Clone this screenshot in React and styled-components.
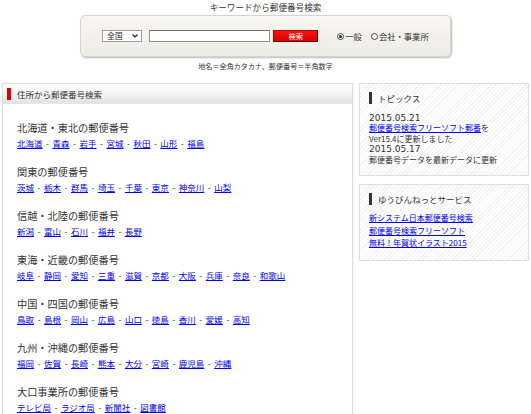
import styled, { createGlobalStyle } from "styled-components";

const GlobalStyle = createGlobalStyle`
  html, body {
    margin: 0;
    padding: 0;
    background: #fff;
  }
  body {
    font-family: "Noto Sans CJK JP", "Noto Sans", sans-serif;
    color: #333;
    width: 531px;
    overflow: hidden;
  }
`;

const Page = styled.div`
  display: flex;
  flex-direction: column;
`;

const Top = styled.header`
  display: flex;
  flex-direction: column;
  align-items: center;
`;

const Title = styled.h1`
  margin: 1px 0 2px;
  font-size: 8.6px;
  line-height: 12px;
  font-weight: normal;
  color: #333;
`;

const SearchBox = styled.form`
  box-sizing: border-box;
  width: 371px;
  height: 42px;
  display: flex;
  align-items: center;
  justify-content: center;
  border: 1px solid #d6d4cf;
  border-radius: 5px;
  background: linear-gradient(#f7f6f2, #eeece5);
  box-shadow: 1px 1px 2px rgba(0, 0, 0, 0.28);
  margin: 0;
`;

const SelectWrap = styled.div`
  position: relative;
  display: flex;
  width: 40px;
  height: 12px;
`;

const Select = styled.select`
  appearance: none;
  -webkit-appearance: none;
  display: block;
  box-sizing: border-box;
  width: 40px;
  height: 12px;
  min-height: 0;
  margin: 0;
  padding: 0 0 0 4px;
  border: 1px solid #9a9a9a;
  border-radius: 0;
  background: #fff;
  font-family: inherit;
  font-size: 7.6px;
  line-height: 10px;
  color: #222;
  outline: none;
`;

const Chevron = styled.svg`
  position: absolute;
  right: 4px;
  top: 4px;
  width: 6px;
  height: 4px;
  pointer-events: none;
`;

const TextInput = styled.input`
  box-sizing: border-box;
  width: 121px;
  height: 12px;
  margin: 0 0 0 7px;
  border: 1px solid #8f8f8f;
  border-top-color: #6f6f6f;
  background: #fff;
  padding: 0;
`;

const SubmitButton = styled.button`
  box-sizing: border-box;
  width: 45px;
  height: 12px;
  margin-left: 3px;
  padding: 0;
  border: 1px solid #b00000;
  border-right-color: #6a0000;
  border-bottom-color: #6a0000;
  background: linear-gradient(#ff1010, #d80000);
  color: #fff;
  font-family: inherit;
  font-size: 7.4px;
  line-height: 10px;
`;

const RadioGroup = styled.div`
  display: flex;
  align-items: center;
  gap: 9px;
  margin-left: 19px;
`;

const RadioLabel = styled.label`
  display: flex;
  align-items: center;
  font-size: 8.3px;
  line-height: 12px;
  color: #333;
`;

const Radio = styled.input`
  appearance: none;
  box-sizing: border-box;
  width: 7px;
  height: 7px;
  margin: 0 1px 0 0;
  border: 1px solid #444;
  border-radius: 50%;
  background: #fff;
  display: grid;
  place-content: center;

  &:checked::before {
    content: "";
    width: 3px;
    height: 3px;
    border-radius: 50%;
    background: #222;
  }
`;

const Note = styled.p`
  margin: 4px 0 0;
  font-size: 7.1px;
  line-height: 10px;
  color: #333;
`;

const Main = styled.div`
  display: flex;
  align-items: flex-start;
  gap: 6px;
  margin: 12px 0 0 2px;
`;

const LeftPanel = styled.section`
  box-sizing: border-box;
  width: 351px;
  height: 360px;
  border: 1px solid #dcdcdc;
  box-shadow: 0 0 1px rgba(0, 0, 0, 0.15);
  background: #fff;
`;

const LeftHeader = styled.h2`
  display: flex;
  align-items: center;
  gap: 6px;
  height: 19px;
  margin: 0;
  padding-left: 4px;
  font-size: 8.5px;
  font-weight: normal;
  color: #333;
  background: linear-gradient(#ffffff, #f1f1f1 55%, #e2e2e2);
  border-bottom: 1px solid #e6e6e6;
`;

const RedBar = styled.span`
  width: 4px;
  height: 12px;
  background: #e00000;
`;

const LeftBody = styled.div`
  padding: 16px 0 0 14px;
`;

const Region = styled.div`
  margin-bottom: 13px;
`;

const RegionTitle = styled.h3`
  margin: 0;
  font-size: 10.2px;
  line-height: 15px;
  font-weight: normal;
  color: #333;
`;

const LinkRow = styled.div`
  font-size: 8.5px;
  line-height: 16px;
`;

const Link = styled.a`
  color: #0000ee;
  text-decoration: underline;
`;

const Sep = styled.span`
  padding: 0 3.5px;
  color: #333;
`;

const RightColumn = styled.aside`
  display: flex;
  flex-direction: column;
  gap: 8px;
  width: 170px;
`;

const SidePanel = styled.section`
  box-sizing: border-box;
  padding: 8px 8px 10px 9px;
  border: 1px solid #dedede;
  background: repeating-linear-gradient(-45deg, #ffffff 0 2px, #f2f2f2 2px 3px);
`;

const SideHeader = styled.h2`
  display: flex;
  align-items: center;
  gap: 6px;
  margin: 0 0 ${(p) => p.$after}px;
  font-size: 8.5px;
  line-height: 12px;
  font-weight: normal;
  color: #333;
`;

const DarkBar = styled.span`
  width: 3px;
  height: 12px;
  background: #333;
`;

const TopicText = styled.div`
  font-size: 8px;
  line-height: 10.4px;
  color: #333;
`;

const DateLine = styled.div`
  font-family: "DejaVu Sans", sans-serif;
  font-size: 9px;
  line-height: 10.4px;
  color: #333;
`;

const ServiceList = styled.ul`
  list-style: none;
  margin: 0;
  padding: 0;
  font-size: 8px;
  line-height: 12.5px;
`;

const regions = [
  ["北海道・東北の郵便番号", ["北海道", "青森", "岩手", "宮城", "秋田", "山形", "福島"]],
  ["関東の郵便番号", ["茨城", "栃木", "群馬", "埼玉", "千葉", "東京", "神奈川", "山梨"]],
  ["信越・北陸の郵便番号", ["新潟", "富山", "石川", "福井", "長野"]],
  ["東海・近畿の郵便番号", ["岐阜", "静岡", "愛知", "三重", "滋賀", "京都", "大阪", "兵庫", "奈良", "和歌山"]],
  ["中国・四国の郵便番号", ["鳥取", "島根", "岡山", "広島", "山口", "徳島", "香川", "愛媛", "高知"]],
  ["九州・沖縄の郵便番号", ["福岡", "佐賀", "長崎", "熊本", "大分", "宮崎", "鹿児島", "沖縄"]],
  ["大口事業所の郵便番号", ["テレビ局", "ラジオ局", "新聞社", "図書館"]],
];

export default function App() {
  return (
    <Page>
      <GlobalStyle />
      <Top>
        <Title>キーワードから郵便番号検索</Title>
        <SearchBox onSubmit={(e) => e.preventDefault()}>
          <SelectWrap>
            <Select defaultValue="all">
              <option value="all">全国</option>
            </Select>
            <Chevron viewBox="0 0 6 4">
              <path d="M0.5 0.5 L3 3 L5.5 0.5" fill="none" stroke="#222" strokeWidth="1.2" />
            </Chevron>
          </SelectWrap>
          <TextInput type="text" />
          <SubmitButton type="submit">検索</SubmitButton>
          <RadioGroup>
            <RadioLabel>
              <Radio type="radio" name="kind" defaultChecked />
              一般
            </RadioLabel>
            <RadioLabel>
              <Radio type="radio" name="kind" />
              会社・事業所
            </RadioLabel>
          </RadioGroup>
        </SearchBox>
        <Note>地名＝全角カタカナ、郵便番号＝半角数字</Note>
      </Top>

      <Main>
        <LeftPanel>
          <LeftHeader>
            <RedBar />
            住所から郵便番号検索
          </LeftHeader>
          <LeftBody>
            {regions.map(([title, prefs]) => (
              <Region key={title}>
                <RegionTitle>{title}</RegionTitle>
                <LinkRow>
                  {prefs.map((name, i) => (
                    <span key={name}>
                      {i > 0 && <Sep>-</Sep>}
                      <Link href="#">{name}</Link>
                    </span>
                  ))}
                </LinkRow>
              </Region>
            ))}
          </LeftBody>
        </LeftPanel>

        <RightColumn>
          <SidePanel>
            <SideHeader $after={9}>
              <DarkBar />
              トピックス
            </SideHeader>
            <DateLine>2015.05.21</DateLine>
            <TopicText>
              <Link href="#">郵便番号検索フリーソフト郵番</Link>を
            </TopicText>
            <TopicText>Ver15.4に更新しました</TopicText>
            <DateLine>2015.05.17</DateLine>
            <TopicText>郵便番号データを最新データに更新</TopicText>
          </SidePanel>
          <SidePanel>
            <SideHeader $after={7}>
              <DarkBar />
              ゆうびんねっとサービス
            </SideHeader>
            <ServiceList>
              <li><Link href="#">新システム日本郵便番号検索</Link></li>
              <li><Link href="#">郵便番号検索フリーソフト</Link></li>
              <li><Link href="#">無料！年賀状イラスト2015</Link></li>
            </ServiceList>
          </SidePanel>
        </RightColumn>
      </Main>
    </Page>
  );
}
